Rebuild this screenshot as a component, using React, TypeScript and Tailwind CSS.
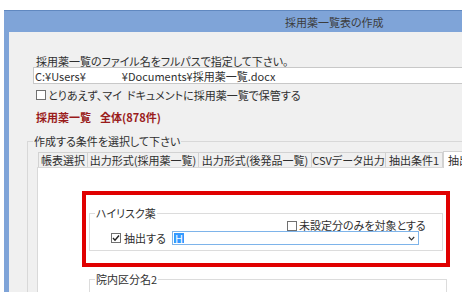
import React from 'react';

const tabs = [
  { label: '帳表選択', w: 'w-[50px]' },
  { label: '出力形式(採用薬一覧)', w: 'w-[111px]' },
  { label: '出力形式(後発品一覧)', w: 'w-[113px]' },
  { label: 'CSVデータ出力', w: 'w-[74px]' },
  { label: '抽出条件1', w: 'w-[57px]' },
];

function CheckBox({ checked }: { checked?: boolean }) {
  return (
    <span className="inline-flex w-[10px] h-[10px] shrink-0 items-center justify-center border border-[#707070] bg-white">
      {checked && (
        <svg width="8" height="8" viewBox="0 0 8 8">
          <path d="M1 4 L3 6.2 L7 1.5" stroke="#222" strokeWidth="1.4" fill="none" />
        </svg>
      )}
    </span>
  );
}

export default function App() {
  return (
    <div className="w-[475px] h-[301px] overflow-hidden bg-white pt-[10px] pl-[4px] font-['Noto_Sans_CJK_JP',sans-serif] [font-feature-settings:'palt'] text-[11px] text-[#2f2f2f]">
      <div className="flex w-[458px] h-[282px] flex-col bg-[#7fa4d8]">
        {/* title bar */}
        <div className="flex h-[22px] shrink-0 items-center border-t border-[#6088c0] pl-[281px] text-[#3c3c3c] leading-[12px]">
          採用薬一覧表の作成
        </div>

        {/* body */}
        <div className="ml-[5px] flex flex-1 flex-col overflow-hidden bg-[#f0f0f0]">
          <p className="mt-[23px] ml-[27px] leading-[12px]">採用薬一覧のファイル名をフルパスで指定して下さい。</p>

          <div className="ml-[24px] flex h-[17px] shrink-0 items-center border border-r-0 border-[#c8c8c8] bg-white pl-[1px] leading-[12px]">
            <span>C:¥Users¥</span>
            <span className="w-[36px]" />
            <span>¥Documents¥採用薬一覧.docx</span>
          </div>

          <div className="mt-[5px] ml-[27px] flex h-[14px] items-center gap-[2px] leading-[12px]">
            <CheckBox />
            <span>
              とりあえず、マイ<span className="ml-[5px]">ドキュメントに採用薬一覧で保管する</span>
            </span>
          </div>

          <div className="mt-[10px] ml-[27px] flex h-[14px] items-center gap-[9px] font-bold text-[#9a1b1b] leading-[12px]">
            <span>採用薬一覧</span>
            <span>全体(878件)</span>
          </div>

          <fieldset className="mt-[11px] ml-[18px] w-[460px] shrink-0 border border-[#d8d8d8]">
            <legend className="ml-[5px] px-[1px] leading-[14px]">作成する条件を選択して下さい</legend>

            <div className="mt-[3px] ml-[10px] flex items-end">
              {tabs.map((t) => (
                <div
                  key={t.label}
                  className={`${t.w} flex h-[15px] items-center justify-center border border-b-0 border-l-0 first:border-l border-[#d2d2d2] bg-[#f0f0f0] leading-[12px]`}
                >
                  {t.label}
                </div>
              ))}
              <div className="relative z-10 mb-[-1px] flex h-[17px] w-[60px] items-center border border-b-0 border-[#d2d2d2] bg-white pl-[4px] leading-[12px]">
                抽出条件2
              </div>
            </div>

            <div className="ml-[9px] h-[200px] w-[460px] border border-[#d9d9d9] bg-white">
              <div className="mt-[23px] ml-[44px] h-[76px] w-[368px] border-4 border-[#e00000]">
                <fieldset className="mt-[11px] ml-[3px] w-[354px] border border-[#dcdcdc] pb-[5px]">
                  <legend className="ml-[5px] px-[1px] leading-[14px]">ハイリスク薬</legend>
                  <div className="flex h-[11px] items-center gap-[2px] pl-[197px] leading-[11px]">
                    <CheckBox />
                    <span>未設定分のみを対象とする</span>
                  </div>
                  <div className="flex h-[14px] items-center pl-[21px]">
                    <CheckBox checked />
                    <span className="ml-[3px] w-[48px] leading-[12px]">抽出する</span>
                    <div className="flex h-[14px] w-[247px] items-center border border-[#7eb4ea] bg-white pl-[1px]">
                      <span className="bg-[#3399ff] px-[1px] text-white leading-[10px]">H</span>
                      <svg className="ml-auto mr-[3px]" width="7" height="5" viewBox="0 0 7 5">
                        <path d="M0.8 1 L3.5 3.8 L6.2 1" stroke="#333" strokeWidth="1.2" fill="none" />
                      </svg>
                    </div>
                  </div>
                </fieldset>
              </div>

              <fieldset className="mt-[5px] ml-[51px] h-[40px] w-[358px] border border-[#dcdcdc]">
                <legend className="ml-[5px] px-[1px] leading-[14px]">院内区分名2</legend>
              </fieldset>
            </div>
          </fieldset>
        </div>
      </div>
    </div>
  );
}
